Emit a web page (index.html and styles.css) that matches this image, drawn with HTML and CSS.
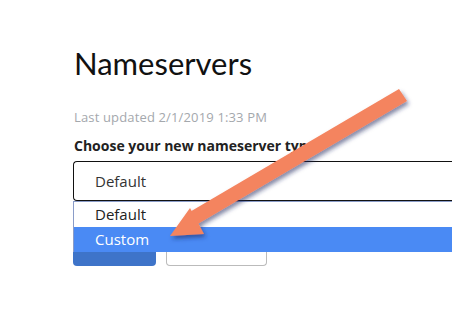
FILE: index.html
```html
<!DOCTYPE html>
<html lang="en">
<head>
    <meta charset="UTF-8">
    <meta name="viewport" content="width=device-width, initial-scale=1.0">
    <title>Nameservers</title>
    <link rel="stylesheet" href="styles.css">
</head>
<body>
    <div class="container">
        <h1>Nameservers</h1>
        <p class="updated">Last updated 2/1/2019 1:33 PM</p>
        <label class="field-label">Choose your new nameserver type</label>
        <div class="select-wrap">
            <div class="select-box">Default</div>
            <ul class="options">
                <li>Default</li>
                <li class="active">Custom</li>
            </ul>
        </div>
        <div class="actions">
            <button class="btn-primary">Save</button>
            <button class="btn-outline">Cancel</button>
        </div>
    </div>

    <!-- annotation arrow drawn over the screenshot -->
    <svg class="arrow" width="452" height="336" viewBox="0 0 452 336">
        <defs>
            <filter id="shadow" x="-20%" y="-20%" width="140%" height="140%">
                <feDropShadow dx="2" dy="3" stdDeviation="2" flood-color="#1a2a60" flood-opacity="0.55"/>
            </filter>
        </defs>
        <g filter="url(#shadow)" fill="#f4845f">
            <polygon points="399,89 407,101 196,225 188,213"/>
            <polygon points="190,208 204,234 170,236"/>
        </g>
    </svg>
</body>
</html>
```

FILE: styles.css
```css
body {
    margin: 0;
    font-family: 'Open Sans', sans-serif;
    background-color: #fff;
    color: #111;
    overflow: hidden;
}
.container {
    padding: 44px 0 0 73px;
}
h1 {
    font-family: 'Lato', sans-serif;
    font-weight: 400;
    font-size: 31px;
    margin: 0 0 26px 1px;
    color: #111;
}
.updated {
    font-size: 13px;
    letter-spacing: 0.15px;
    color: #a4a8ad; /* muted grey */
    margin: 0 0 10px 1px;
}
.field-label {
    display: block;
    font-weight: 700;
    font-size: 14px;
    color: #222;
    margin: 0 0 6px 1px;
}
.select-wrap {
    width: 400px;
}
.select-box {
    height: 38px;
    border: 1px solid #111;
    border-radius: 4px 0 0 4px;
    border-right: none;
    padding-left: 21px;
    line-height: 38px;
    font-size: 15px;
    color: #333;
}
.options {
    list-style: none;
    margin: 0;
    padding: 0;
    border-left: 1px solid #8a9cc8;
    border-top: 1px solid #8a9cc8;
}
.options li {
    height: 25px;
    line-height: 25px;
    padding-left: 21px;
    font-size: 15px;
    color: #222;
}
.options li.active {
    background-color: #4a8af4;
    color: #fff;
}
.actions {
    display: flex;
    gap: 10px;
}
.btn-primary {
    width: 83px;
    height: 14px;
    background-color: #3e74c9;
    border: none;
    border-radius: 0 0 4px 4px;
    color: transparent;
}
.btn-outline {
    width: 101px;
    height: 14px;
    background: #fff;
    border: 1px solid #bbb;
    border-top: none;
    border-radius: 0 0 4px 4px;
    color: transparent;
}
.arrow {
    position: absolute;
    left: 0;
    top: 0;
}
```
